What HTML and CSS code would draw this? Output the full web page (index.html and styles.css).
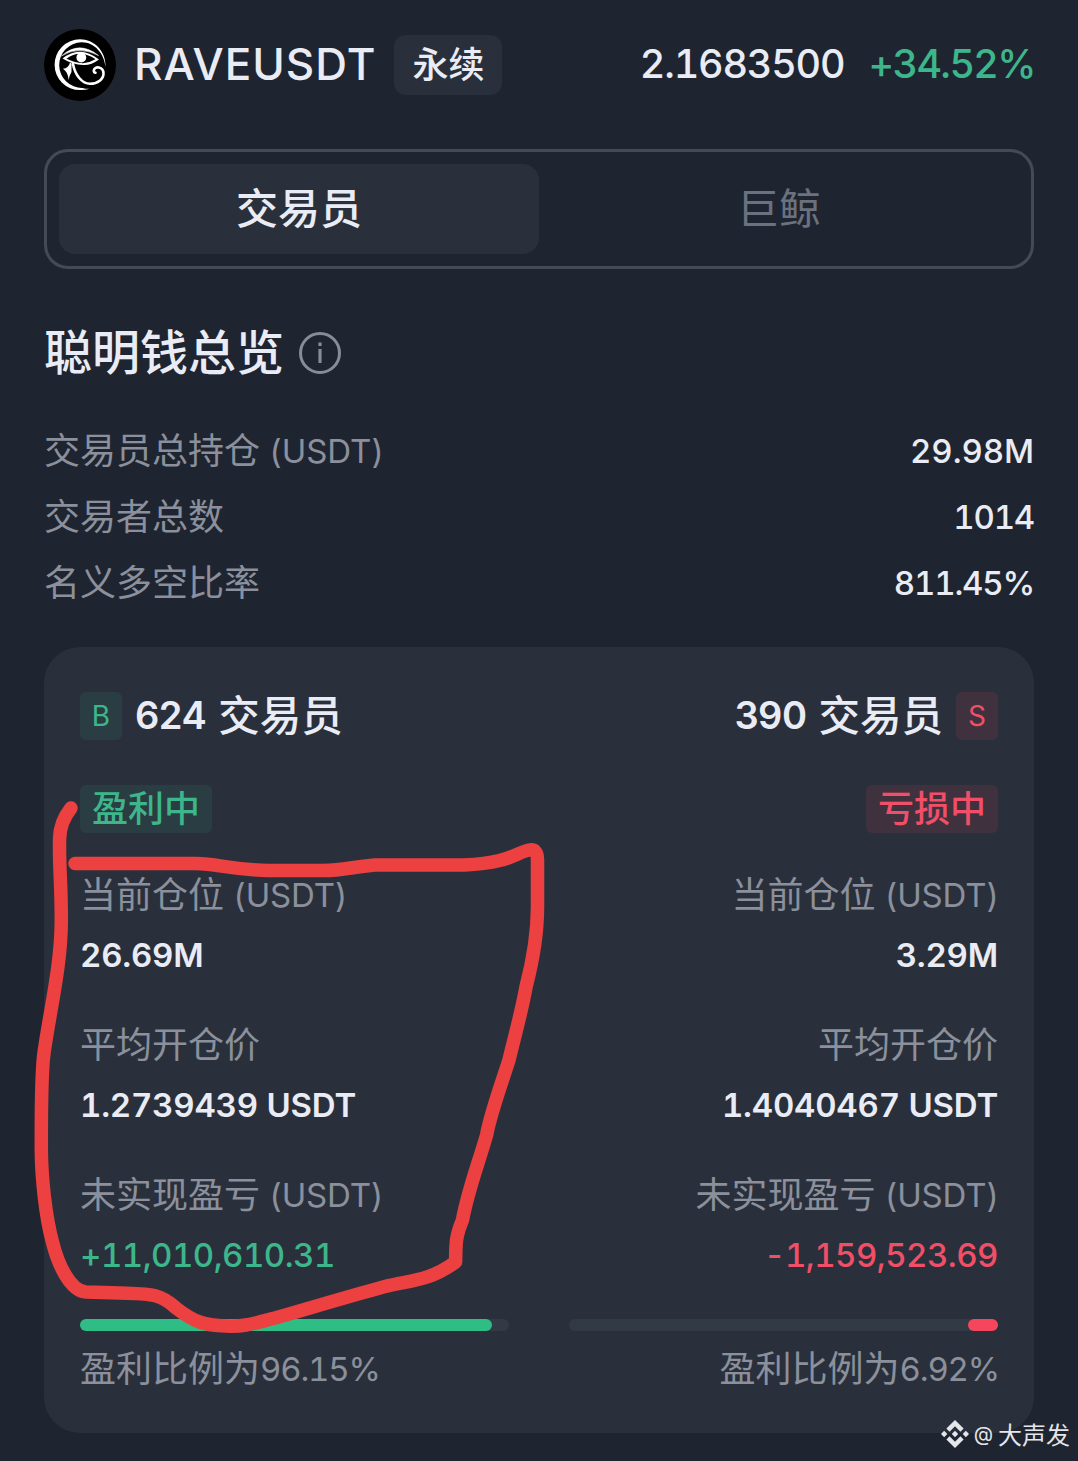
FILE: index.html
```html
<!DOCTYPE html>
<html lang="zh-CN">
<head>
	<meta charset="utf-8">
	<title>RAVEUSDT 永续</title>
	<link rel="stylesheet" href="styles.css">
</head>
<body>
	<header class="head">
		<svg class="logo" viewBox="0 0 72 72">
			<circle cx="36" cy="36" r="36" fill="#000"/>
			<path d="M61.600 38C62 22 50 10.300 36 10.300A25.400 25.400 0 0 0 36 61.100Q41 61.300 45.500 59.800Q42 60 38.500 58.900A22.600 22.600 0 0 1 37.500 13.300C50 13 60 24 61.600 38z" fill="#fff"/>
			<path d="M17.500 27Q35 11 54.500 26.500Q35 16.500 17.500 27z" fill="#fff" stroke="#fff" stroke-width=".5"/>
			<path d="M18.500 29.500Q36 15.500 55 30.500Q47 36.500 39 36Q29 36 18.500 29.500zM22.500 29.800Q31 34 39 34.300Q45 34 51.500 30.300Q36 19.500 22.500 29.800z" fill="#fff" fill-rule="evenodd"/>
			<circle cx="37.300" cy="28.500" r="4.900" fill="#fff"/>
			<path d="M26 33.500L27.500 34.500V43Q25.500 46 24.700 51Q24 43 19 39.800Q24.500 39.500 26 33.500z" fill="#fff"/>
			<path d="M29 35C31 46 38 54.800 46 54.800C54 54.800 59.500 50 59.500 44.500C59.500 37.500 50.500 36.500 49.800 41.500Q49.800 43.500 51.500 43.800" fill="none" stroke="#fff" stroke-width="2.600" stroke-linecap="round"/>
		</svg>
		<span class="symbol">RAVEUSDT</span>
		<span class="type">永续</span>
		<span class="price">2.1683500</span>
		<span class="change">+34.52%</span>
	</header>

	<nav class="tabs">
		<a class="tab active">交易员</a>
		<a class="tab">巨鲸</a>
	</nav>

	<h1 class="title">聪明钱总览
		<svg class="info" viewBox="0 0 42 42">
			<circle cx="21" cy="21" r="19.500" fill="none" stroke="#878c98" stroke-width="3"/>
			<path d="M21 17v14M21 10.500v3.500" stroke="#878c98" stroke-width="3.200"/>
		</svg>
	</h1>

	<ul class="total">
		<li>交易员总持仓<span class="en unit">(USDT)</span><b class="en">29.98M</b></li>
		<li>交易者总数<b class="en">1014</b></li>
		<li>名义多空比率<b class="en">811.45%</b></li>
	</ul>

	<div class="card">
		<section class="side long">
			<h2 class="count"><i class="mark">B</i><span class="num">624</span>交易员</h2>
			<div class="state">盈利中</div>
			<dl class="data">
				<dt>当前仓位<span class="en unit">(USDT)</span></dt>
				<dd class="en">26.69M</dd>
				<dt>平均开仓价</dt>
				<dd class="en">1.2739439 USDT</dd>
				<dt>未实现盈亏<span class="en unit">(USDT)</span></dt>
				<dd class="en pnl">+11,010,610.31</dd>
			</dl>
			<div class="bar"><div class="fill" style="width:96.15%"></div></div>
			<p class="rate">盈利比例为<span class="en">96.15%</span></p>
		</section>
		<section class="side short">
			<h2 class="count"><span class="num">390</span>交易员<i class="mark">S</i></h2>
			<div class="state">亏损中</div>
			<dl class="data">
				<dt>当前仓位<span class="en unit">(USDT)</span></dt>
				<dd class="en">3.29M</dd>
				<dt>平均开仓价</dt>
				<dd class="en">1.4040467 USDT</dd>
				<dt>未实现盈亏<span class="en unit">(USDT)</span></dt>
				<dd class="en pnl">-1,159,523.69</dd>
			</dl>
			<div class="bar"><div class="fill" style="width:6.92%"></div></div>
			<p class="rate">盈利比例为<span class="en">6.92%</span></p>
		</section>
	</div>

	<!-- 手绘红圈 -->
	<svg class="pen" viewBox="0 0 1078 1461">
		<path d="M71 808Q60 822 59.600 838C59 870 61.300 880 61.300 920C61.300 965 50 1010 44 1053C41 1075 41.300 1110 41.300 1150C41.500 1175 45 1215 52.700 1243C58 1264 70 1291 86 1292L120 1293C150 1294 160 1293 176 1308C195 1323 205 1325 226 1326C245 1327 255 1323 275 1318C310 1308 350 1296 385 1286.500C410 1280 428 1282 455.600 1262C456 1245 455 1238 462.500 1220C468 1190 478 1165 486.600 1135C490 1115 502 1082 509 1060C515 1035 522 1010 526 987C533 960 537.500 935 537.500 907V860Q537.500 848 529 850C515 853 510 863 464 865H375C350 867 345 870.500 323 870.500H268C225 869 220 864 195.600 863.500H75"/>
	</svg>

	<div class="author">
		<svg class="bnb" viewBox="0 0 126.610 126.610">
			<path d="M38.730 53.200l24.590-24.580 24.600 24.600 14.300-14.310L63.320 0l-38.900 38.900zM0 63.310l14.300-14.310 14.310 14.310-14.310 14.300zM38.730 73.420l24.590 24.590 24.600-24.600 14.310 14.290-38.900 38.910-38.910-38.880zM98 63.310l14.310-14.310 14.300 14.310-14.310 14.300zM77.830 63.300L63.320 48.780 48.810 63.280l14.510 14.500z" fill="#e4e6ea"/>
		</svg>
		<span class="at">@</span>
		<span class="name">大声发</span>
	</div>
</body>
</html>
```
FILE: styles.css
```css
*{
	box-sizing: border-box;
	margin:0;
	padding:0;
}
body{
	position: relative;
	width:1078px;
	height:1461px;
	padding:29px 44px 0;
	overflow: hidden;
	font-family: "Noto Sans CJK SC", sans-serif;
	font-size:36px;
	color:#eaecf5;
	background-color: #1f2530;
}
.en{
	font-family: Inter, "Noto Sans CJK SC", sans-serif;
	font-size:33px;
	font-weight: 500;
	font-variant-numeric: tabular-nums;
}
.unit{
	margin-left: 9px;
	font-weight: 400;
}

/* 顶部 */
.head{
	display: flex;
	align-items: center;
	height:72px;
}
.logo{
	width:72px;
	height:72px;
}
.symbol,
.price,
.change{
	padding-bottom: 2px;
	font-family: Inter, sans-serif;
	font-weight: 500;
	font-variant-numeric: tabular-nums;
}
.symbol{
	margin-left: 18px;
	font-size:44px;
	letter-spacing: 1px;
}
.type{
	margin-left: 18px;
	width:108px;
	height:60px;
	border-radius: 12px;
	line-height: 54px;
	text-align: center;
	font-weight: 500;
	background-color: #2a303b;
}
.price{
	margin-left: auto;
	font-size:39.500px;
	letter-spacing: -1.200px;
}
.change{
	margin-left: 24px;
	margin-right: -1px;
	font-size:39.500px;
	letter-spacing: -1.600px;
	color:#3db68b;
}

.tabs{
	display: flex;
	margin-top: 48px;
	height:120px;
	padding:12px;
	border:3px solid #444a56;
	border-radius: 24px;
}
.tab{
	flex:1;
	border-radius: 16px;
	line-height: 83px;
	text-align: center;
	font-size:42px;
	color:#6b717e;
}
.tab.active{
	font-weight: 500;
	color:#eaecf5;
	background-color: #2a303b;
}

.title{
	display: flex;
	align-items: flex-start;
	margin-top: 56px;
	height:56px;
	line-height: 49px;
	font-size:48px;
	font-weight: 500;
}
.info{
	margin:7px 0 0 15px;
	width:42px;
	height:42px;
}
.total{
	margin-top: 37px;
	list-style: none;
}
.total li{
	display: flex;
	align-items: flex-start;
	height:66px;
	line-height: 61px;
	color:#8b909c;
}
.total .en{
	line-height: 66px;
	letter-spacing: -.100px;
}
.total b{
	margin-left: auto;
	color:#eaecf5;
}
.total li + li .en{
	letter-spacing: -1.200px;
}

/* 多空卡片 */
.card{
	display: flex;
	gap:60px;
	margin-top: 31px;
	height:786px;
	padding:45px 36px 0;
	border-radius: 36px;
	background-color: #2a303b;
}
.side{
	flex:1;
	display: flex;
	flex-direction: column;
	align-items: flex-start;
}
.short{
	align-items: flex-end;
}
.count{
	display: flex;
	align-items: flex-start;
	height:48px;
	line-height: 42px;
	font-size:41.500px;
	font-weight: 500;
}
.num{
	margin-right: 12px;
	line-height: 46px;
	font-family: Inter, sans-serif;
	font-size:38px;
	font-weight: 600;
	letter-spacing: -.500px;
}
.mark{
	width:42px;
	height:48px;
	border-radius: 6px;
	line-height: 48px;
	text-align: center;
	font-family: Inter, sans-serif;
	font-size:28px;
	font-weight: 400;
	font-style: normal;
}
.long .mark{
	margin-right: 13px;
}
.short .mark{
	margin-left: 13px;
}
.state{
	margin-top: 45px;
	height:48px;
	padding:0 12px;
	border-radius: 6px;
	line-height: 42px;
	font-weight: 500;
}
.long .mark,
.long .state{
	color:#3db68b;
	background-color: #2a3d42;
}
.short .mark,
.short .state{
	color:#f04f67;
	background-color: #40313f;
}
.data{
	margin-top: 32px;
}
.data dt,
.data dd{
	display: flex;
	align-items: flex-start;
	height:60px;
	line-height: 55px;
}
.short dt,
.short dd{
	justify-content: flex-end;
}
.data dt{
	color:#8b909c;
}
.data .en{
	line-height: 60px;
	letter-spacing: -.200px;
}
.short .unit{
	margin-right: -1px;
}
.data dd{
	margin-bottom: 30px;
	font-weight: 600;
}
.data dd:last-child{
	margin-bottom: 0;
}
.data .pnl{
	font-weight: 500;
	letter-spacing: -.500px;
}
.long .pnl{
	color:#3db68b;
}
.short .pnl{
	color:#f04f67;
}
.bar{
	display: flex;
	margin-top: 34px;
	width:100%;
	height:12px;
	border-radius: 6px;
	background-color: #323a45;
}
.short .bar{
	justify-content: flex-end;
}
.fill{
	height:12px;
	border-radius: 6px;
	background-color: #2ebd85;
}
.short .fill{
	background-color: #f6465d;
}
.rate{
	display: flex;
	align-items: flex-start;
	margin-top: 14px;
	height:48px;
	line-height: 43px;
	color:#8b909c;
}
.rate .en{
	line-height: 48px;
	font-weight: 400;
	letter-spacing: -1.200px;
}
.short .rate{
	margin-right: -1px;
}

.pen{
	position: absolute;
	left:0;
	top:0;
	width:1078px;
	height:1461px;
	fill:none;
	stroke:#ed4040;
	stroke-width:13.500;
	stroke-linecap:round;
	stroke-linejoin:round;
}
.author{
	position: absolute;
	right:8px;
	bottom:9px;
	display: flex;
	align-items: center;
	height:36px;
	line-height: 36px;
	font-size:24px;
	color:#e4e6ea;
}
.bnb{
	width:28px;
	height:28px;
}
.at{
	margin:0 5px;
	font-family: Inter, sans-serif;
	font-size:20px;
}
.name{
	padding-bottom: 1px;
}
```
